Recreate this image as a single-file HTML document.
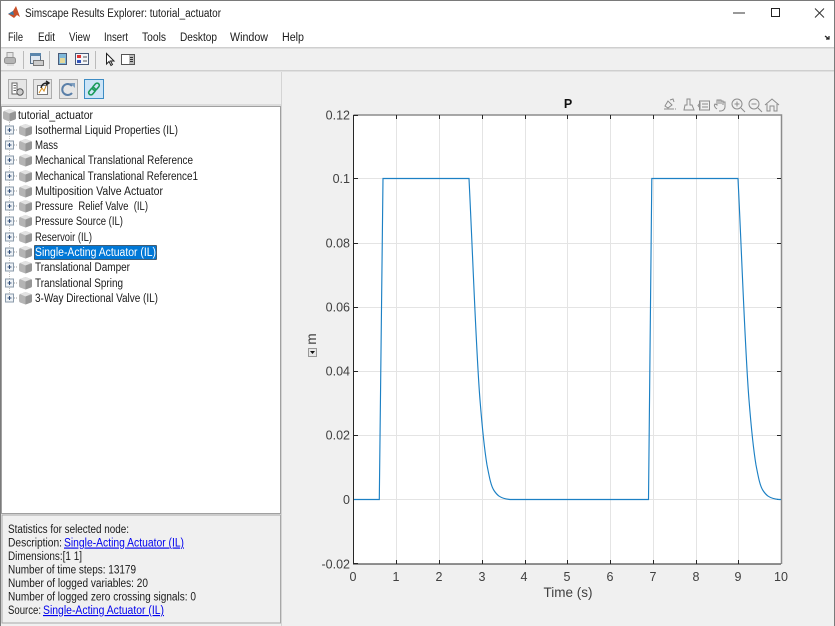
<!DOCTYPE html>
<html><head><meta charset="utf-8"><title>Simscape Results Explorer: tutorial_actuator</title>
<style>
html,body{margin:0;padding:0;background:#f0f0f0;width:835px;height:626px;overflow:hidden}
svg{display:block;font-family:"Liberation Sans",sans-serif}
.t{font-size:11.5px;fill:#1a1a1a}
.a{font-size:12.5px;fill:#404040}
.l{fill:#0000ee;font-size:11.5px;text-decoration:underline}
</style></head><body>
<svg width="835" height="626" viewBox="0 0 835 626" xmlns="http://www.w3.org/2000/svg">
<defs>
<g id="cube"><path d="M6.5 0.5 L12 2.5 Q13 3 13 4 V9.5 Q13 10.5 12 11 L6.5 13 L1 11 Q0 10.5 0 9.5 V4 Q0 3 1 2.5Z" fill="#b4b4b4"/><path d="M6.5 0.5 L12 2.5 L6.5 5 L1 2.5Z" fill="#e2e2e2"/><path d="M6.5 5 L13 3 V9.5 Q13 10.5 12 11 L6.5 13Z" fill="#969696"/></g>
<g id="exp"><rect x="5.5" y="-4.5" width="8" height="8" fill="#eef2f6" stroke="#8a9aaa"/><path d="M7.5 -.5H11.5M9.5 -2.5V1.5" stroke="#34507a" fill="none"/><path d="M14 -.5H18" stroke="#a0a0a0" stroke-dasharray="1 1" fill="none"/></g>
</defs>
<rect width="835" height="626" fill="#f0f0f0"/>
<rect x="0" y="0" width="835" height="47" fill="#fff"/>
<rect x="0" y="47" width="835" height="1.5" fill="#cfcfcf"/>
<rect x="0" y="70" width="835" height="1.5" fill="#cfcfcf"/>
<!-- left panel -->
<rect x="0" y="104.5" width="281" height="1" fill="#c8c8c8"/>
<rect x="1.5" y="106.5" width="279" height="407" fill="#fff" stroke="#a0a0a0"/>
<rect x="2" y="515" width="278.5" height="108" fill="#f0f0f0" stroke="#a8a8a8"/>
<rect x="281" y="72" width="1" height="554" fill="#d4d4d4"/>
<!-- title -->
<path d="M8 14 L13 11 L16 6 L20 17 L17 15 L14 18Z" fill="#c8502a"/><path d="M8 14 L13 11 L14 15Z" fill="#3a7ca8"/>
<text x="25" y="17" class="t" textLength="196" lengthAdjust="spacingAndGlyphs">Simscape Results Explorer: tutorial_actuator</text>
<path d="M733 13H745" stroke="#333" stroke-width="1"/>
<rect x="771.5" y="8.5" width="8" height="8" fill="none" stroke="#222" stroke-width="1"/>
<path d="M815 8.5L824 17.5M824 8.5L815 17.5" stroke="#333" fill="none"/>
<!-- menu -->
<text x="8" y="41" class="t" textLength="15" lengthAdjust="spacingAndGlyphs">File</text>
<text x="38" y="41" class="t" textLength="17" lengthAdjust="spacingAndGlyphs">Edit</text>
<text x="69" y="41" class="t" textLength="21" lengthAdjust="spacingAndGlyphs">View</text>
<text x="104" y="41" class="t" textLength="24" lengthAdjust="spacingAndGlyphs">Insert</text>
<text x="142" y="41" class="t" textLength="24" lengthAdjust="spacingAndGlyphs">Tools</text>
<text x="180" y="41" class="t" textLength="37" lengthAdjust="spacingAndGlyphs">Desktop</text>
<text x="230" y="41" class="t" textLength="38" lengthAdjust="spacingAndGlyphs">Window</text>
<text x="282" y="41" class="t" textLength="22" lengthAdjust="spacingAndGlyphs">Help</text>
<path d="M825 36L829 39M826 39H829V36" stroke="#222" stroke-width="1.2" fill="none"/>
<!-- toolbar 1 -->
<g>
<path d="M7 52.5H13V58H7Z" fill="#e4e4e4" stroke="#a0a0a0"/><rect x="4.5" y="57.5" width="11" height="6" rx="2" fill="#b4b4b4" stroke="#909090"/><path d="M7 64H14V66H7Z" fill="#ddd"/>
<rect x="23" y="51" width="1" height="18" fill="#bbb"/>
<rect x="30.5" y="53.5" width="10" height="10" fill="#dfe8f2" stroke="#56718c"/><rect x="30" y="53" width="11" height="3" fill="#5b86ad"/><rect x="33.5" y="60.5" width="10" height="5" fill="#ccc" stroke="#777"/>
<rect x="49" y="51" width="1" height="18" fill="#bbb"/>
<rect x="58.5" y="53.5" width="8" height="11" fill="#7fb7d8" stroke="#4a5a78"/><rect x="60" y="58" width="5" height="5" fill="#e3d79a"/>
<rect x="75.5" y="53.5" width="13" height="11" fill="#f4f6fa" stroke="#4a5a78"/><rect x="77" y="55" width="4" height="3" fill="#d33"/><rect x="77" y="60" width="4" height="3" fill="#35b"/><path d="M83 57H87M83 61H87" stroke="#555"/>
<rect x="95" y="51" width="1" height="18" fill="#bbb"/>
<path d="M106.5 53.5V64L109 61.5L111 65.5L112.5 64.5L110.5 61H114Z" fill="#fff" stroke="#222"/>
<rect x="121.5" y="54.5" width="13" height="10" fill="#fff" stroke="#555"/><rect x="129" y="55" width="5" height="9" fill="#bbb"/><path d="M130 57.5H133M130 59.5H133M130 61.5H133" stroke="#333"/>
</g>
<!-- toolbar 2 -->
<g>
<rect x="8.5" y="79.5" width="18" height="19" fill="#e6e6e6" stroke="#adadad"/>
<path d="M12 83H17V94H12ZM13.5 85.5H16M13.5 88H16M13.5 90.5H16" fill="#fff" stroke="#666"/><circle cx="20" cy="92" r="3.2" fill="#ccc" stroke="#555"/>
<rect x="33.5" y="79.5" width="18" height="19" fill="#e6e6e6" stroke="#adadad"/>
<rect x="37.5" y="85.5" width="10" height="9" fill="#fff" stroke="#777"/><path d="M39 93L42 88L44 91L46 86" stroke="#d89020" fill="none"/><path d="M41 88C42 84 44 83 48 83M46 81L49 83L46 85" stroke="#222" stroke-width="1.4" fill="none"/>
<rect x="59.5" y="79.5" width="18" height="19" fill="#e6e6e6" stroke="#adadad"/>
<path d="M72 86A5.5 5.5 0 1 0 72 93" stroke="#5a7fa8" stroke-width="2" fill="none"/><path d="M70 83H75V88Z" fill="#7f9fc0"/>
<rect x="84.5" y="79.5" width="19" height="19" fill="#cce4f7" stroke="#3d8cc4"/>
<g transform="rotate(-50 94 89)" fill="none" stroke="#1a9a5a" stroke-width="1.6"><rect x="87" y="86.8" width="8" height="4.4" rx="2.2"/><rect x="93" y="86.8" width="8" height="4.4" rx="2.2"/></g>
</g>
<!-- tree -->
<use href="#cube" x="3" y="108.5"/>
<text x="18" y="119" class="t" textLength="75" lengthAdjust="spacingAndGlyphs">tutorial_actuator</text>
<path d="M9.5 120V296" stroke="#c0c0c0" stroke-dasharray="1 1" fill="none"/>
<use href="#exp" x="0" y="130.5"/><use href="#cube" x="19" y="123.5"/>
<use href="#exp" x="0" y="145.5"/><use href="#cube" x="19" y="138.5"/>
<use href="#exp" x="0" y="160.5"/><use href="#cube" x="19" y="153.5"/>
<use href="#exp" x="0" y="176.5"/><use href="#cube" x="19" y="169.5"/>
<use href="#exp" x="0" y="191.5"/><use href="#cube" x="19" y="184.5"/>
<use href="#exp" x="0" y="206.5"/><use href="#cube" x="19" y="199.5"/>
<use href="#exp" x="0" y="221.5"/><use href="#cube" x="19" y="214.5"/>
<use href="#exp" x="0" y="237.5"/><use href="#cube" x="19" y="230.5"/>
<use href="#exp" x="0" y="252.5"/><use href="#cube" x="19" y="245.5"/>
<use href="#exp" x="0" y="267.5"/><use href="#cube" x="19" y="260.5"/>
<use href="#exp" x="0" y="283.5"/><use href="#cube" x="19" y="276.5"/>
<use href="#exp" x="0" y="298.5"/><use href="#cube" x="19" y="291.5"/>
<text x="35" y="134" class="t" textLength="143" lengthAdjust="spacingAndGlyphs">Isothermal Liquid Properties (IL)</text>
<text x="35" y="149" class="t" textLength="23" lengthAdjust="spacingAndGlyphs">Mass</text>
<text x="35" y="164" class="t" textLength="158" lengthAdjust="spacingAndGlyphs">Mechanical Translational Reference</text>
<text x="35" y="180" class="t" textLength="163" lengthAdjust="spacingAndGlyphs">Mechanical Translational Reference1</text>
<text x="35" y="195" class="t" textLength="128" lengthAdjust="spacingAndGlyphs">Multiposition Valve Actuator</text>
<text x="35" y="210" class="t" textLength="113" lengthAdjust="spacingAndGlyphs" xml:space="preserve">Pressure  Relief Valve  (IL)</text>
<text x="35" y="225" class="t" textLength="88" lengthAdjust="spacingAndGlyphs">Pressure Source (IL)</text>
<text x="35" y="241" class="t" textLength="57" lengthAdjust="spacingAndGlyphs">Reservoir (IL)</text>
<rect x="34.5" y="245.5" width="122" height="14" fill="#0078d7" stroke="#000" stroke-dasharray="1 1"/>
<text x="35" y="256" class="t" style="fill:#fff" textLength="121" lengthAdjust="spacingAndGlyphs">Single-Acting Actuator (IL)</text>
<text x="35" y="271" class="t" textLength="95" lengthAdjust="spacingAndGlyphs">Translational Damper</text>
<text x="35" y="287" class="t" textLength="88" lengthAdjust="spacingAndGlyphs">Translational Spring</text>
<text x="35" y="302" class="t" textLength="123" lengthAdjust="spacingAndGlyphs">3-Way Directional Valve (IL)</text>
<!-- stats -->
<text x="8" y="533" class="t" textLength="121" lengthAdjust="spacingAndGlyphs">Statistics for selected node:</text>
<text x="8" y="546.5" class="t" textLength="54" lengthAdjust="spacingAndGlyphs">Description:</text>
<text x="64" y="546.5" class="l" textLength="120" lengthAdjust="spacingAndGlyphs">Single-Acting Actuator (IL)</text>
<text x="8" y="560" class="t" textLength="74" lengthAdjust="spacingAndGlyphs">Dimensions:[1 1]</text>
<text x="8" y="573.5" class="t" textLength="128" lengthAdjust="spacingAndGlyphs">Number of time steps: 13179</text>
<text x="8" y="587" class="t" textLength="140" lengthAdjust="spacingAndGlyphs">Number of logged variables: 20</text>
<text x="8" y="600.5" class="t" textLength="188" lengthAdjust="spacingAndGlyphs">Number of logged zero crossing signals: 0</text>
<text x="8" y="614" class="t" textLength="33" lengthAdjust="spacingAndGlyphs">Source:</text>
<text x="43" y="614" class="l" textLength="121" lengthAdjust="spacingAndGlyphs">Single-Acting Actuator (IL)</text>
<!-- axes -->
<rect x="354" y="115" width="427" height="449" fill="#fff"/>
<g stroke="#e4e4e4" stroke-width="1" fill="none">
<path d="M396.5 115V564M439.5 115V564M482.5 115V564M525.5 115V564M567.5 115V564M610.5 115V564M653.5 115V564M696.5 115V564M738.5 115V564"/>
<path d="M354 178.5H781M354 243.5H781M354 307.5H781M354 371.5H781M354 435.5H781M354 499.5H781"/>
</g>
<path d="M353.5 115H781.5V564" fill="none" stroke="#8c8c8c" stroke-width="1.5"/>
<path d="M353.5 115V564H781" fill="none" stroke="#262626" stroke-width="1"/>
<g stroke="#262626" stroke-width="1" fill="none">
<path d="M396.5 564V560M439.5 564V560M482.5 564V560M525.5 564V560M567.5 564V560M610.5 564V560M653.5 564V560M696.5 564V560M738.5 564V560"/>
<path d="M354 115.5H358M354 178.5H358M354 243.5H358M354 307.5H358M354 371.5H358M354 435.5H358M354 499.5H358M354 563.5H358"/>
<path d="M396.5 115V119M439.5 115V119M482.5 115V119M525.5 115V119M567.5 115V119M610.5 115V119M653.5 115V119M696.5 115V119M738.5 115V119"/>
<path d="M781 178.5H777M781 243.5H777M781 307.5H777M781 371.5H777M781 435.5H777M781 499.5H777"/>
</g>
<path d="M354 499.5H379.3L383 178.5H469C473 260 476 350 480 400C482 425 484.5 450 487 465C489.5 478 491 486 494 490.5C497 495 500 498.5 510 499.5H648.5L651.8 178.5H738C742 260 745 350 749 400C751 425 753.5 450 756 465C758.5 478 760 486 763 490.5C766 495 769 498.5 779 499.5H781" fill="none" stroke="#1c80c4" stroke-width="1.15"/>
<g class="a" text-anchor="end">
<text x="350" y="119.5" class="a">0.12</text>
<text x="350" y="183" class="a">0.1</text>
<text x="350" y="247.5" class="a">0.08</text>
<text x="350" y="311.5" class="a">0.06</text>
<text x="350" y="375.5" class="a">0.04</text>
<text x="350" y="439.5" class="a">0.02</text>
<text x="350" y="504" class="a">0</text>
<text x="350" y="568.5" class="a">-0.02</text>
</g>
<g text-anchor="middle">
<text x="353" y="581" class="a">0</text>
<text x="396" y="581" class="a">1</text>
<text x="439" y="581" class="a">2</text>
<text x="482" y="581" class="a">3</text>
<text x="524" y="581" class="a">4</text>
<text x="567" y="581" class="a">5</text>
<text x="610" y="581" class="a">6</text>
<text x="653" y="581" class="a">7</text>
<text x="696" y="581" class="a">8</text>
<text x="738" y="581" class="a">9</text>
<text x="781" y="581" class="a">10</text>
<text x="568" y="597" style="font-size:13.5px;fill:#404040">Time (s)</text>
<text x="568" y="108" style="font-size:12.5px;font-weight:bold;fill:#111">P</text>
</g>
<text transform="translate(316,339) rotate(-90)" text-anchor="middle" style="font-size:13.5px;fill:#404040">m</text>
<rect x="308.5" y="348.5" width="8" height="8" fill="#e8e8e8" stroke="#999"/>
<path d="M310 351H315L312.5 354Z" fill="#111"/>
<!-- axes toolbar -->
<g fill="none" stroke="#8c8c8c" stroke-width="1">
<path d="M664 109H674M665 106L668 101L672 105L668 108ZM670 100L673 99L674 102"/><path d="M675 109H676"/>
<path d="M684 110H694L692 105H690V99H687V105H685Z"/>
<rect x="699.5" y="101" width="10" height="9"/><path d="M698 105.5L700 103V108ZM702 104H708M702 107H708"/>
<path d="M717 109C714 107 714 105 715 104L717 105V101M717 103V100H719V104M719 100H721V104M721 101H723V105M723 102H725V107C725 109 723 111 721 111H719"/>
<circle cx="737" cy="104" r="5"/><path d="M741 108L745 112M734.5 104H739.5M737 101.5V106.5"/>
<circle cx="754" cy="104" r="5"/><path d="M758 108L762 112M751.5 104H756.5"/>
<path d="M765 105L772 99L779 105M767 104V111H770V106H774V111H777V104"/>
</g>
<!-- window border -->
<path d="M.5 626V.5H834.5V626" fill="none" stroke="#7a7a7a" stroke-width="1"/>
</svg>
</body></html>
